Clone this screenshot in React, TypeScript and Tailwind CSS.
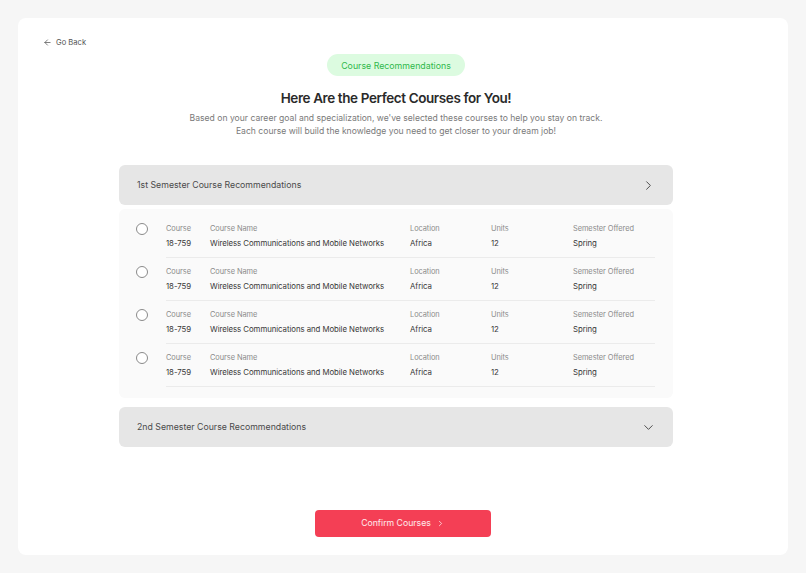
import { ArrowLeft, ChevronRight, ChevronDown } from 'lucide-react'

const rows = [1, 2, 3, 4].map(() => ({
  code: '18-759',
  name: 'Wireless Communications and Mobile Networks',
  location: 'Africa',
  units: '12',
  semester: 'Spring',
}))

function Field({ label, value, className }: { label: string; value: string; className: string }) {
  return (
    <div className={className}>
      <p className="text-[7.4px] leading-[10px] tracking-[-0.05px] text-[#8a8a8a]">{label}</p>
      <p className="mt-[4px] text-[7.8px] leading-[10px] tracking-[-0.05px] text-[#383838]">{value}</p>
    </div>
  )
}

export default function App() {
  return (
    <div className="min-h-screen bg-[#f6f6f6] p-[18px] font-['Inter',sans-serif]">
      <div className="h-[537px] rounded-[8px] bg-white pt-[19px]">
        <button className="ml-[25px] flex items-center gap-[4px] text-[7.6px] text-[#555]">
          <ArrowLeft className="h-[9px] w-[9px]" strokeWidth={2} />
          Go Back
        </button>

        <div className="ml-[101px] w-[554px]">
          <div className="flex flex-col items-center">
            <span className="mt-[6px] flex h-[22px] items-center rounded-full bg-[#dcfbe0] px-[14px] text-[8.8px] text-[#2fb84a]">
              Course Recommendations
            </span>
            <h1 className="mt-[13px] text-[13.5px] font-semibold leading-[18px] tracking-[-0.4px] text-[#2a2a2a]">
              Here Are the Perfect Courses for You!
            </h1>
            <p className="mt-[5px] text-center text-[8.6px] leading-[13px] text-[#7a7a7a]">
              Based on your career goal and specialization, we've selected these courses to help you stay on track.
              <br />
              Each course will build the knowledge you need to get closer to your dream job!
            </p>
          </div>

          <div className="mt-[27px] flex h-[40px] items-center justify-between rounded-[6px] bg-[#e6e6e6] pl-[18px] pr-[17px]">
            <span className="text-[8.75px] text-[#4a4a4a]">1st Semester Course Recommendations</span>
            <ChevronRight className="h-[15px] w-[15px] text-[#444]" strokeWidth={1.5} />
          </div>

          <div className="mt-[4px] rounded-[6px] bg-[#fafafa] pb-[11px] pl-[17px] pr-[18px] pt-[6px]">
            {rows.map((r, i) => (
              <div key={i} className="flex">
                <div className="w-[30px] pt-[8px]">
                  <div className="h-[12px] w-[12px] rounded-full border border-[#8a8a8a] bg-white" />
                </div>
                <div className="flex flex-1 border-b border-[#ebebeb] pb-[9px] pt-[9px]">
                  <Field label="Course" value={r.code} className="w-[44px]" />
                  <Field label="Course Name" value={r.name} className="w-[200px]" />
                  <Field label="Location" value={r.location} className="w-[81px]" />
                  <Field label="Units" value={r.units} className="w-[82px]" />
                  <Field label="Semester Offered" value={r.semester} className="flex-1" />
                </div>
              </div>
            ))}
          </div>

          <div className="mt-[9px] flex h-[40px] items-center justify-between rounded-[6px] bg-[#e6e6e6] pl-[18px] pr-[17px]">
            <span className="text-[8.75px] text-[#4a4a4a]">2nd Semester Course Recommendations</span>
            <ChevronDown className="h-[15px] w-[15px] text-[#444]" strokeWidth={1.5} />
          </div>
        </div>

        <div className="mt-[63px] flex justify-center">
          <button className="flex h-[27px] w-[176px] items-center justify-center gap-[5px] rounded-[4px] bg-[#f43f55] text-[8.7px] text-white/90">
            Confirm Courses
            <ChevronRight className="h-[9px] w-[9px]" strokeWidth={2} />
          </button>
        </div>
      </div>
    </div>
  )
}
